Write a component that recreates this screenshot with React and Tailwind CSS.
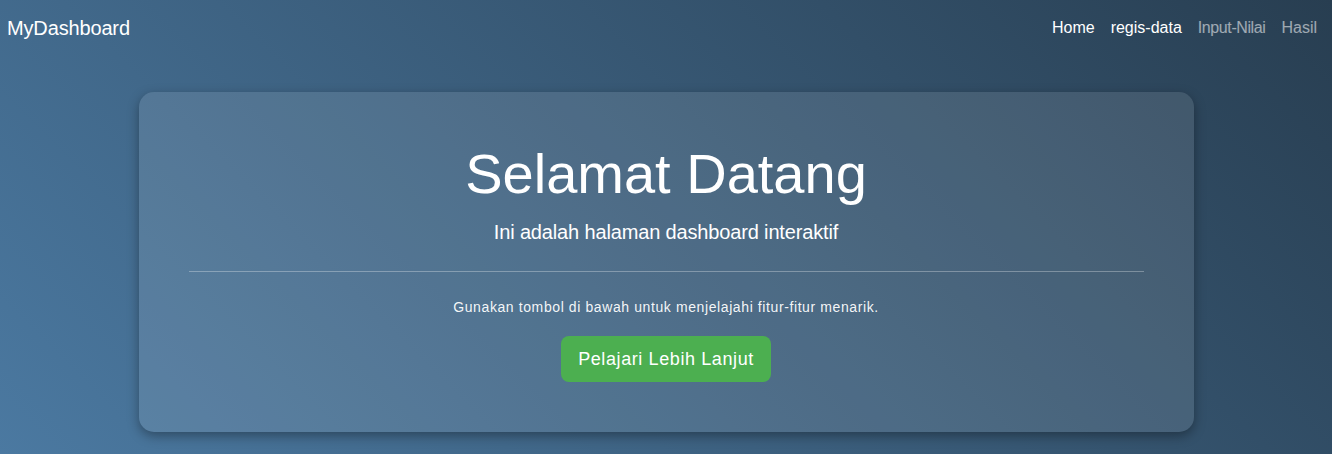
export default function App() {
  return (
    <div
      className="min-h-[454px] w-full bg-[linear-gradient(45deg,#4b79a1,#283e51)] text-white"
      style={{ fontFamily: '"Liberation Sans", Arial, sans-serif' }}
    >
      <nav className="flex h-[55px] items-center justify-between pl-[7px] pr-[7px]">
        <a className="text-[20px] leading-[30px] tracking-[-0.15px] text-white">MyDashboard</a>
        <ul className="flex items-center">
          <li><a className="block px-2 text-[16px] leading-6 text-white">Home</a></li>
          <li><a className="block px-2 text-[16px] leading-6 text-white">regis-data</a></li>
          <li><a className="block px-2 text-[16px] leading-6 tracking-[-0.4px] text-white/55">Input-Nilai</a></li>
          <li><a className="block px-2 text-[16px] leading-6 text-white/55">Hasil</a></li>
        </ul>
      </nav>
      <div className="pt-[37px]">
        <div className="mx-auto w-[1055px] rounded-[15px] bg-white/10 px-[50px] pt-[48px] pb-[50px] text-center shadow-[0_4px_12px_rgba(0,0,0,0.35)]">
          <h1 className="text-[56px] leading-[67px] font-normal">Selamat Datang</h1>
          <p className="mt-[10px] text-[20px] leading-[30px] tracking-[-0.15px]">Ini adalah halaman dashboard interaktif</p>
          <hr className="mt-[24px] border-0 border-t border-white/30" />
          <p className="mt-[25px] text-[14px] leading-[21px] tracking-[0.6px] text-white/95">
            Gunakan tombol di bawah untuk menjelajahi fitur-fitur menarik.
          </p>
          <button className="mt-[18px] rounded-[8px] bg-[#4caf50] px-[17px] py-[10px] text-[18px] leading-[26px] tracking-[0.6px] text-white">
            Pelajari Lebih Lanjut
          </button>
        </div>
      </div>
    </div>
  );
}
